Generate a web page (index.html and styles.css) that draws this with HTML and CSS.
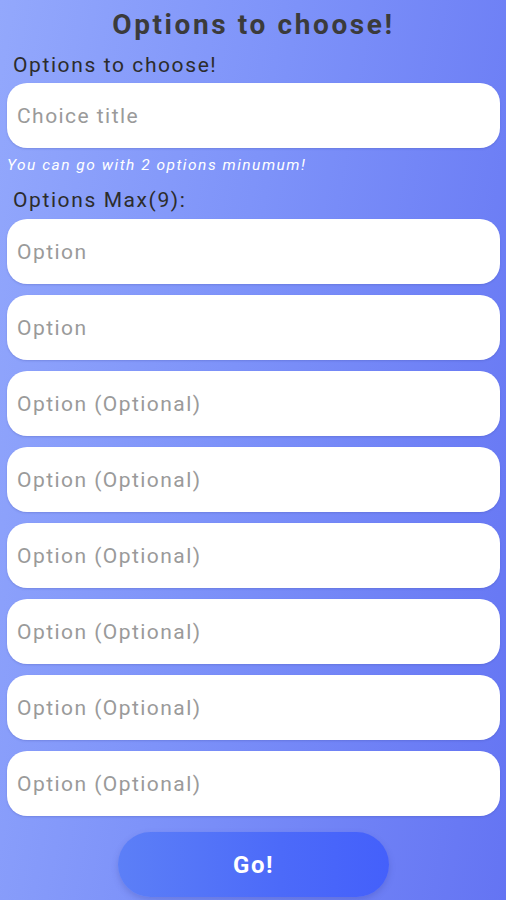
FILE: index.html
```html
<!DOCTYPE html>
<html>
<head>
<meta charset="utf-8">
<link rel="stylesheet" href="styles.css">
</head>
<body>
<div class="page">
  <h1 class="title">Options to choose!</h1>
  <div class="label">Options to choose!</div>
  <div class="field"><span class="ph">Choice title</span></div>
  <div class="hint">You can go with 2 options minumum!</div>
  <div class="label label2">Options Max(9):</div>
  <div class="list">
    <div class="field"><span class="ph">Option</span></div>
    <div class="field"><span class="ph">Option</span></div>
    <div class="field"><span class="ph">Option (Optional)</span></div>
    <div class="field"><span class="ph">Option (Optional)</span></div>
    <div class="field"><span class="ph">Option (Optional)</span></div>
    <div class="field"><span class="ph">Option (Optional)</span></div>
    <div class="field"><span class="ph">Option (Optional)</span></div>
    <div class="field"><span class="ph">Option (Optional)</span></div>
  </div>
  <div class="actions"><div class="go">Go!</div></div>
</div>
</body>
</html>
```
FILE: styles.css
```css
html, body {
  margin: 0;
  padding: 0;
}
body {
  width: 506px;
  height: 900px;
  overflow: hidden;
  background: linear-gradient(100deg, #93a8fc 0%, #7d92f9 45%, #6474f3 100%);
  font-family: Roboto, "Noto Sans", sans-serif;
}
.page {
  display: flex;
  flex-direction: column;
  padding: 0 6px 0 7px;
}
.title {
  margin: 8px 0 0;
  text-align: center;
  font-size: 28px;
  font-weight: 700;
  line-height: 34px;
  letter-spacing: 2.6px;
  color: #3b3b3b;
}
.label {
  margin: 11px 0 0 6px;
  font-size: 21px;
  line-height: 24px;
  letter-spacing: 1.6px;
  color: #2c2c2c;
}
.label2 {
  margin-top: 14px;
}
.field {
  height: 65px;
  background: #fff;
  border-radius: 20px;
  display: flex;
  align-items: center;
  padding-left: 10px;
  box-shadow: 0 1px 2px rgba(60, 70, 160, 0.25);
  margin-top: 6px;
}
.ph {
  font-size: 21px;
  letter-spacing: 1.45px;
  color: #9a9a9a;
}
.hint {
  margin-top: 8px;
  font-size: 15.5px;
  font-style: italic;
  letter-spacing: 1.5px;
  color: #ffffff;
  line-height: 18px;
}
.list {
  display: flex;
  flex-direction: column;
  gap: 11px;
  margin-top: 7px;
}
.list .field {
  margin-top: 0;
}
.actions {
  display: flex;
  justify-content: center;
  margin-top: 16px;
}
.go {
  width: 271px;
  height: 65px;
  border-radius: 33px;
  background: linear-gradient(90deg, #5c7ff7 0%, #4c6af9 60%, #4460fb 100%);
  color: #fff;
  font-weight: 700;
  font-size: 24px;
  letter-spacing: 1.5px;
  display: flex;
  align-items: center;
  justify-content: center;
  box-shadow: 0 3px 6px rgba(50, 60, 150, 0.25);
}
```
